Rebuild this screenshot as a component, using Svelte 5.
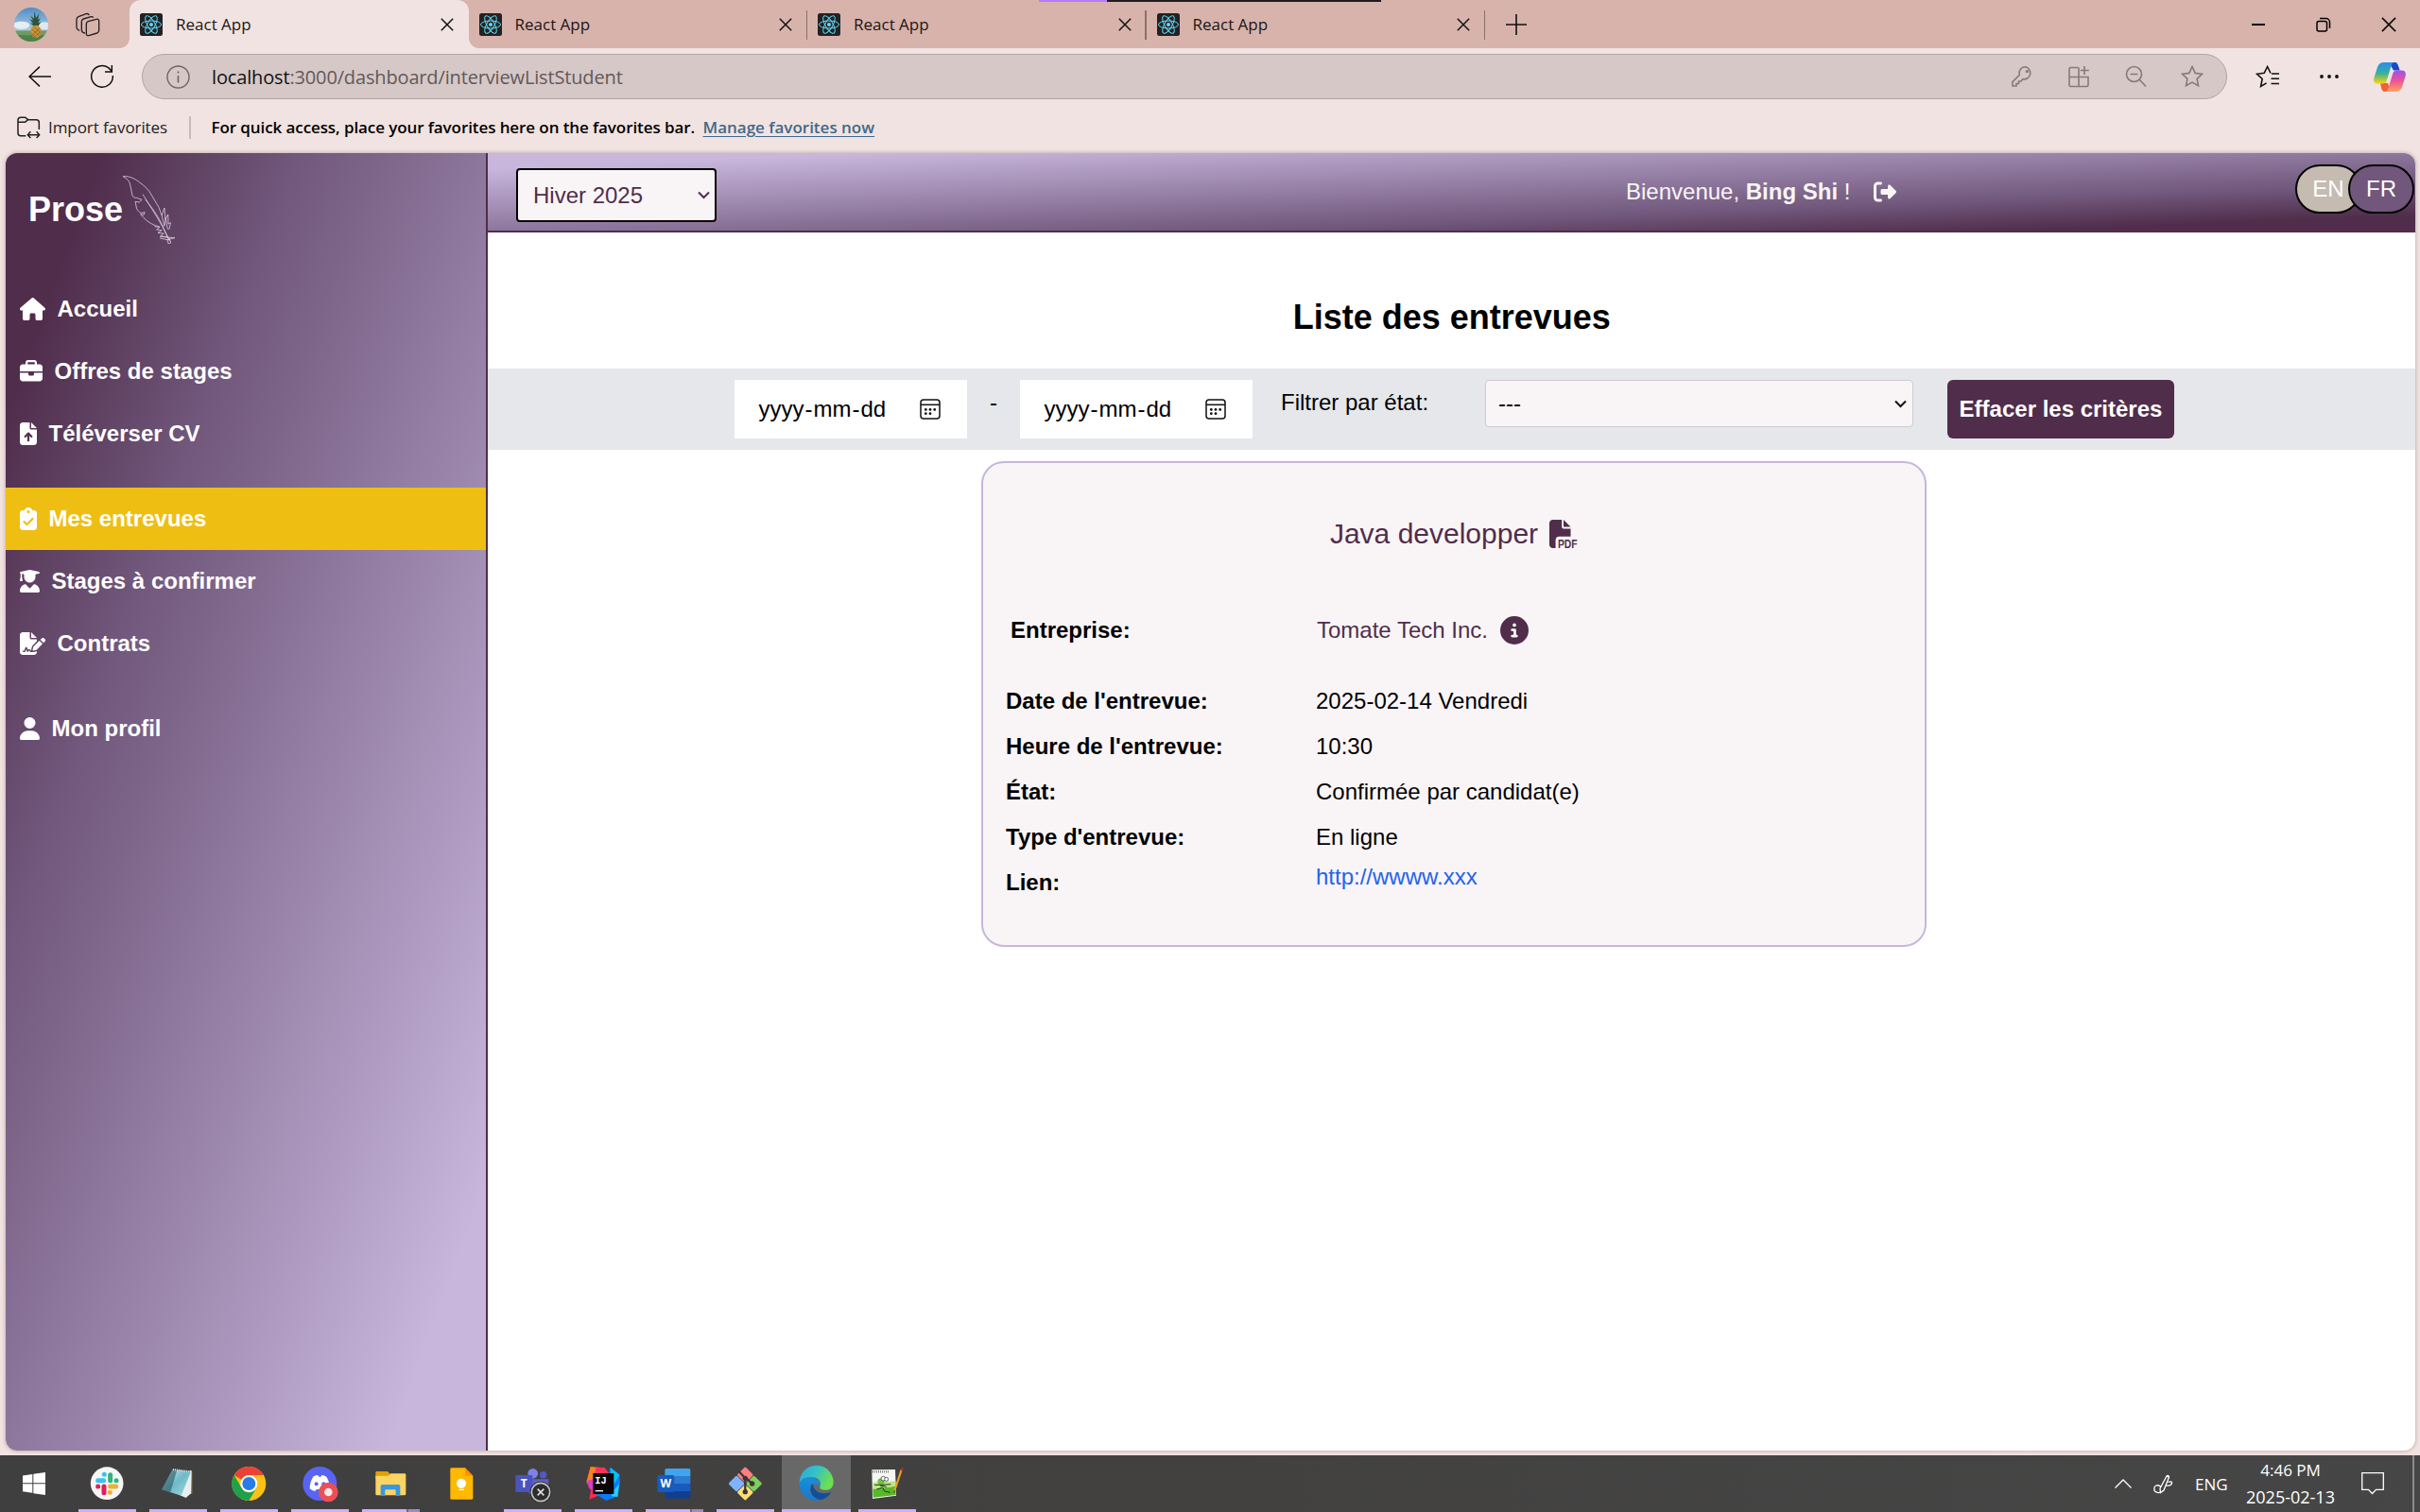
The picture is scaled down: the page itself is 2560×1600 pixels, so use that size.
<script>
  const tabs = [
    { title: 'React App', active: true },
    { title: 'React App', divider: true },
    { title: 'React App', divider: true },
    { title: 'React App', divider: true }
  ];

  const icons = {
    home: { w: 576, d: 'M575.8 255.5c0 18-15 32.1-32 32.1h-32l.7 160.2c0 2.7-.2 5.4-.5 8.1V472c0 22.1-17.9 40-40 40H456c-1.1 0-2.2 0-3.3-.1c-1.4 .1-2.8 .1-4.2 .1H416 392c-22.1 0-40-17.9-40-40V448 384c0-17.7-14.3-32-32-32H256c-17.7 0-32 14.3-32 32v64 24c0 22.1-17.9 40-40 40H160 128.1c-1.5 0-3-.1-4.5-.2c-1.2 .1-2.4 .2-3.6 .2H104c-22.1 0-40-17.9-40-40V360c0-.9 0-1.9 .1-2.8V287.6H32c-18 0-32-14-32-32.1c0-9 3-17 10-24L266.4 8c7-7 15-8 22-8s15 2 21 7L564.8 231.5c8 7 12 15 11 24z' },
    briefcase: { w: 512, d: 'M184 48H328c4.4 0 8 3.6 8 8V96H176V56c0-4.4 3.6-8 8-8zm-56 8V96H64C28.7 96 0 124.7 0 160v96H192 320 512V160c0-35.3-28.7-64-64-64H384V56c0-30.9-25.1-56-56-56H184c-30.9 0-56 25.1-56 56zM512 288H320v32c0 17.7-14.3 32-32 32H224c-17.7 0-32-14.3-32-32V288H0V416c0 35.3 28.7 64 64 64H448c35.3 0 64-28.7 64-64V288z' },
    upload: { w: 384, d: 'M64 0C28.7 0 0 28.7 0 64V448c0 35.3 28.7 64 64 64H320c35.3 0 64-28.7 64-64V160H256c-17.7 0-32-14.3-32-32V0H64zM256 0V128H384L256 0zM216 408c0 13.3-10.7 24-24 24s-24-10.7-24-24V305.9l-31 31c-9.4 9.4-24.6 9.4-33.9 0s-9.4-24.6 0-33.9l72-72c9.4-9.4 24.6-9.4 33.9 0l72 72c9.4 9.4 9.4 24.6 0 33.9s-24.6 9.4-33.9 0l-31-31V408z' },
    clipboard: { w: 384, d: 'M192 0c-41.8 0-77.4 26.7-90.5 64H64C28.7 64 0 92.7 0 128V448c0 35.3 28.7 64 64 64H320c35.3 0 64-28.7 64-64V128c0-35.3-28.7-64-64-64H282.5C269.4 26.7 233.8 0 192 0zm0 64a32 32 0 1 1 0 64 32 32 0 1 1 0-64zM305 273L177 401c-9.4 9.4-24.6 9.4-33.9 0L79 337c-9.4-9.4-9.4-24.6 0-33.9s24.6-9.4 33.9 0l47 47L271 239c9.4-9.4 24.6-9.4 33.9 0s9.4 24.6 0 33.9z' },
    graduate: { w: 448, d: 'M219.3 .5c3.1-.6 6.3-.6 9.4 0l200 40C439.9 42.7 448 52.6 448 64s-8.1 21.3-19.3 23.5L352 102.9V160c0 70.7-57.3 128-128 128s-128-57.3-128-128V102.9L48 93.3v65.1l15.7 78.4c.9 4.7-.3 9.6-3.3 13.3s-7.6 5.9-12.4 5.9H16c-4.8 0-9.3-2.1-12.4-5.9s-4.3-8.6-3.3-13.3L16 158.4V86.6C6.5 83.3 0 74.3 0 64C0 52.6 8.1 42.7 19.3 40.5l200-40zM111.9 327.7c10.5-3.4 21.8 .4 29.4 8.5l71 75.5c6.3 6.7 17 6.7 23.3 0l71-75.5c7.6-8.1 18.9-11.9 29.4-8.5C401 348.6 448 409.4 448 481.3c0 17-13.8 30.7-30.7 30.7H30.7C13.8 512 0 498.2 0 481.3c0-71.9 47-132.7 111.9-153.6z' },
    signature: { w: 576, d: 'M64 0C28.7 0 0 28.7 0 64V448c0 35.3 28.7 64 64 64H320c35.3 0 64-28.7 64-64V428.7c-2.7 1.1-5.4 2-8.2 2.7l-60.1 15c-3 .7-6 1.2-9 1.4c-.9 .1-1.8 .2-2.7 .2H240c-6.1 0-11.6-3.4-14.3-8.8l-8.8-17.7c-1.7-3.4-5.1-5.5-8.8-5.5s-7.2 2.1-8.8 5.5l-8.8 17.7c-2.9 5.9-9.2 9.4-15.7 8.8s-12.1-5.1-13.9-11.3L144 381l-9.8 32.8c-6.1 20.3-24.8 34.2-46 34.2H80c-8.8 0-16-7.2-16-16s7.2-16 16-16h8.2c7.1 0 13.3-4.6 15.3-11.4l14.9-49.5c3.4-11.3 13.8-19.1 25.6-19.1s22.2 7.8 25.6 19.1l11.6 38.6c7.4-6.2 16.8-9.7 26.8-9.7c15.9 0 30.4 9 37.5 23.2l4.4 8.8h8.9c-3.1-8.8-3.7-18.4-1.4-27.8l15-60.1c2.8-11.3 8.6-21.5 16.8-29.7L384 203.6V160H256c-17.7 0-32-14.3-32-32V0H64zM256 0V128H384L256 0zM549.8 139.7c-15.6-15.6-40.9-15.6-56.6 0l-29.4 29.4 71 71 29.4-29.4c15.6-15.6 15.6-40.9 0-56.6l-14.4-14.4zM311.9 321c-4.1 4.1-7 9.2-8.4 14.9l-15 60.1c-1.4 5.5 .2 11.2 4.2 15.2s9.7 5.6 15.2 4.2l60.1-15c5.6-1.4 10.8-4.3 14.9-8.4L512.1 262.7l-71-71L311.9 321z' },
    user: { w: 448, d: 'M224 256A128 128 0 1 0 224 0a128 128 0 1 0 0 256zm-45.7 48C79.8 304 0 383.8 0 482.3C0 498.7 13.3 512 29.7 512H418.3c16.4 0 29.7-13.3 29.7-29.7C448 383.8 368.2 304 269.7 304H178.3z' },
    logout: { w: 512, d: 'M377.9 105.9L500.7 228.7c7.2 7.2 11.3 17.1 11.3 27.3s-4.1 20.1-11.3 27.3L377.9 406.1c-6.4 6.4-15 9.9-24 9.9c-18.7 0-33.9-15.2-33.9-33.9l0-62.1-128 0c-17.7 0-32-14.3-32-32l0-64c0-17.7 14.3-32 32-32l128 0 0-62.1c0-18.7 15.2-33.9 33.9-33.9c9 0 17.6 3.6 24 9.9zM160 96L96 96c-17.7 0-32 14.3-32 32l0 256c0 17.7 14.3 32 32 32l64 0c17.7 0 32 14.3 32 32s-14.3 32-32 32l-64 0c-53 0-96-43-96-96L0 128C0 75 43 32 96 32l64 0c17.7 0 32 14.3 32 32s-14.3 32-32 32z' },
    info: { w: 512, d: 'M256 512A256 256 0 1 0 256 0a256 256 0 1 0 0 512zM216 336h24V272H216c-13.3 0-24-10.7-24-24s10.7-24 24-24h48c13.3 0 24 10.7 24 24v88h8c13.3 0 24 10.7 24 24s-10.7 24-24 24H216c-13.3 0-24-10.7-24-24s10.7-24 24-24zm40-208a32 32 0 1 1 0 64 32 32 0 1 1 0-64z' }
  };

  const menu = [
    [
      { icon: 'home', label: 'Accueil' },
      { icon: 'briefcase', label: 'Offres de stages' },
      { icon: 'upload', label: 'Téléverser CV' }
    ],
    [
      { icon: 'clipboard', label: 'Mes entrevues', active: true },
      { icon: 'graduate', label: 'Stages à confirmer' },
      { icon: 'signature', label: 'Contrats' }
    ],
    [{ icon: 'user', label: 'Mon profil' }]
  ];

  const details = [
    { label: "Date de l'entrevue:", value: '2025-02-14 Vendredi' },
    { label: "Heure de l'entrevue:", value: '10:30' },
    { label: 'État:', value: 'Confirmée par candidat(e)' },
    { label: "Type d'entrevue:", value: 'En ligne' },
    { label: 'Lien:', value: 'http://wwww.xxx', link: true }
  ];
</script>

{#snippet solid(name)}
  <svg class="solid" viewBox="0 0 {icons[name].w} 512" fill="currentColor"><path d={icons[name].d} /></svg>
{/snippet}

{#snippet cross(size)}
  <svg width={size} height={size} viewBox="0 0 14 14" stroke="#111" stroke-width="1.5" fill="none"><path d="M.8.8 13.2 13.2M13.2.8.8 13.2" /></svg>
{/snippet}

{#snippet dateField()}
  <div class="date">
    <span class="mask"><span>yyyy</span>-<span>mm</span>-<span>dd</span></span>
    <svg width="22" height="22" viewBox="0 0 22 22" fill="none" stroke="#111" stroke-width="1.5">
      <rect x="1" y="1" width="20" height="20" rx="3" />
      <path d="M1 6.3h20" />
      <g fill="#111" stroke="none">
        <circle cx="6.3" cy="11.4" r="1.4" /><circle cx="11" cy="11.4" r="1.4" /><circle cx="15.7" cy="11.4" r="1.4" />
        <circle cx="6.3" cy="15.7" r="1.4" /><circle cx="11" cy="15.7" r="1.4" />
      </g>
    </svg>
  </div>
{/snippet}

<div class="desktop">
  <div class="tabstrip">
    <div class="corner">
      <svg width="36" height="36" viewBox="45 24 108 108">
        <defs>
          <clipPath id="av"><circle cx="99" cy="78" r="54" /></clipPath>
          <linearGradient id="sky" x1="0" y1="0" x2="0" y2="1"><stop offset="0" stop-color="#4d8dc8" /><stop offset=".7" stop-color="#b6cfe2" /></linearGradient>
        </defs>
        <g clip-path="url(#av)">
          <rect x="45" y="24" width="108" height="108" fill="url(#sky)" />
          <ellipse cx="68" cy="80" rx="26" ry="12" fill="#e6eef3" /><ellipse cx="142" cy="82" rx="20" ry="12" fill="#dde8ef" />
          <rect x="45" y="97" width="108" height="36" fill="#6f9a62" />
          <path d="M45 112h108v20H45z" fill="#4f8148" />
          <path d="m112 86-17-13 10 2-12-15 12 6-9-17 12 10 1-23 6 21 9-15-3 21 8-6-8 16 9-3-10 15z" fill="#2c5538" />
          <ellipse cx="114" cy="100" rx="17" ry="20" fill="#c9963d" />
          <path d="m100 92 25 22m-27-9 16 14m-8-35 22 20m-2-14-27 24m30-14-20 18" stroke="#8d6424" stroke-width="2.500" />
        </g>
      </svg>
      <svg width="26" height="26" viewBox="241 39 78 78" fill="none" stroke="#222" stroke-width="4">
        <path d="M275 76q0-6 6-8l26-7q8-2 8 6v30q0 6-6 8l-26 8q-8 1-8-6z" />
        <path d="M271 105q-11 0-11-11V68q0-6 6-8l24-7q5-1 7 3" />
        <path d="M254 97q-10-2-10-12V62q0-6 6-9l24-9q7-2 10 4" />
      </svg>
    </div>
    {#each tabs as tab}
      <div class="tab" class:active={tab.active}>
        <svg width="24" height="24" viewBox="0 0 24 24" fill="none" stroke="#61dafb" stroke-width="1">
          <rect width="24" height="24" rx="2.500" fill="#222" stroke="none" />
          <ellipse cx="12" cy="12" rx="10.500" ry="4" />
          <ellipse cx="12" cy="12" rx="10.500" ry="4" transform="rotate(60 12 12)" />
          <ellipse cx="12" cy="12" rx="10.500" ry="4" transform="rotate(120 12 12)" />
          <circle cx="12" cy="12" r="2" fill="#61dafb" stroke="none" />
        </svg>
        <span class="tab-title">{tab.title}</span>
        {@render cross(14)}
        {#if tab.divider}<i></i>{/if}
      </div>
    {/each}
    <svg class="newtab" width="22" height="22" viewBox="0 0 22 22" stroke="#111" stroke-width="1.600"><path d="M0 11h22M11 0v22" /></svg>
    <div class="window-buttons">
      <svg width="16" height="16" viewBox="0 0 16 16" stroke="#000" stroke-width="2"><path d="M1 8h14" /></svg>
      <svg width="16" height="16" viewBox="0 0 16 16" fill="none" stroke="#000" stroke-width="1.500"><rect x="1" y="4.500" width="10.500" height="10.500" rx="2" /><path d="M4 1.500h6.500a4 4 0 0 1 4 4V12" /></svg>
      {@render cross(16)}
    </div>
    <div class="progress"><b></b></div>
  </div>

  <div class="toolbar">
    <svg class="back" width="24" height="22" viewBox="90 208 72 66" fill="none" stroke="#111" stroke-width="4.500"><path d="M162 241H93M126 210 93 241l33 31" /></svg>
    <svg class="reload" width="26" height="26" viewBox="285 204 78 78" fill="none" stroke="#111" stroke-width="4.500"><path d="M358 240a34 34 0 1 1-14-25l10 10M355 207v21h-22" /></svg>
    <div class="address">
      <svg width="25" height="25" viewBox="0 0 25 25" fill="none" stroke="#6d6463" stroke-width="1.400"><circle cx="12.500" cy="12.500" r="11.500" /><path d="M12.500 11v7.500M12.500 6.500v2" stroke-width="1.600" /></svg>
      <span class="url"><b>localhost</b>:3000/dashboard/interviewListStudent</span>
      <div class="address-icons">
        <svg viewBox="0 0 24 24"><path d="M15.500 1.800a6.500 6.500 0 0 0-6.200 8.600L2 17.700V22h4v-2.500h2.500V17H11l1.800-2.300A6.500 6.500 0 1 0 15.500 1.800z" /><circle cx="17.300" cy="6.600" r=".9" fill="#857a79" /></svg>
        <svg viewBox="0 0 24 24"><path d="M11.500 2.500H3.500a1.500 1.500 0 0 0-1.500 1.500v17a1.500 1.500 0 0 0 1.500 1.500h17a1.500 1.500 0 0 0 1.500-1.500v-8.500H2M12 2.500v20M18 1v9M13.800 5.500h9" /></svg>
        <svg viewBox="0 0 24 24"><circle cx="10.500" cy="9.500" r="8" /><path d="m16.500 15.500 6.500 7M6.500 9.500h8" /></svg>
        <svg viewBox="0 0 24 24"><path d="m12 1.500 3.200 6.900 7.300.9-5.400 5.100 1.400 7.400-6.500-3.700-6.500 3.700 1.400-7.400L1.500 9.300l7.300-.9z" /></svg>
      </div>
    </div>
    <svg class="favs" width="26" height="26" viewBox="0 0 26 26" fill="none" stroke="#111" stroke-width="1.600"><path d="M16 9.500 12.600 2.500 9.200 9.300 1.500 10.300l5.600 5.200-1.500 8 6-3.600M17 10h8M16.500 15.300H25M16.500 20.500H25" /></svg>
    <svg class="dots" width="22" height="6" viewBox="0 0 22 6" fill="#111"><circle cx="3" cy="3" r="1.900" /><circle cx="11" cy="3" r="1.900" /><circle cx="19" cy="3" r="1.900" /></svg>
    <svg class="copilot" width="34" height="31" viewBox="0 0 34 31">
      <defs>
        <linearGradient id="cpa" x1="0" y1="0" x2="0" y2="1"><stop offset="0" stop-color="#2a8df0" /><stop offset=".5" stop-color="#35b0a0" /><stop offset="1" stop-color="#ffd400" /></linearGradient>
        <linearGradient id="cpb" x1="0" y1="0" x2="0" y2="1"><stop offset="0" stop-color="#a050ec" /><stop offset=".5" stop-color="#ee5495" /><stop offset="1" stop-color="#ffa35c" /></linearGradient>
      </defs>
      <path d="M16 0h6c3 0 3.500 2 4.500 5l1.200 3.500H21z" fill="#1b47c9" />
      <path d="M18 31h-6c-2.600 0-3.500-2-4.200-5l-.8-4h8z" fill="#f0603a" />
      <path d="M11 0h11c-2 0-3 2-4 5.500l-4 13C13 21.500 12 22.500 9 22.500H4.500C.5 22.500-.5 20 .5 16L4 5C5.200 1.500 7.500 0 11 0z" fill="url(#cpa)" />
      <path d="M23 31H12c2 0 3-2 4-5.500l4-13c1-3 2-4 5-4h4.500c4 0 5 2.500 4 6.500L30 26c-1.200 3.500-3.500 5-7 5z" fill="url(#cpb)" />
    </svg>
  </div>

  <div class="favbar">
    <svg width="26" height="24" viewBox="54 367 78 72" fill="none" stroke="#222" stroke-width="4.500"><path d="M82 429H66q-9 0-9-9V380q0-9 9-9h12q3 0 6 3l6 4h25q9 0 9 9v22M57 386h20q4 0 7-4l5-4M88 426h36M97 416l-9 10 9 10M116 416l9 10-9 10" /></svg>
    <span class="import">Import favorites</span>
    <i></i>
    <span class="hint">For quick access, place your favorites here on the favorites bar.</span>
    <span class="manage">Manage favorites now</span>
  </div>

  <div class="page">
    <aside>
      <div class="brand">
        <span>Prose</span>
        <svg width="56" height="73" viewBox="377 77 162 219" preserveAspectRatio="none" fill="none" stroke="#eadfea" stroke-opacity=".85" stroke-width="2.500">
          <path d="M377 79c18-2 35 6 50 18 16 12 30 25 37 40l23 40 9 26 8-24 3 35 8-14 1 30 7-4-5 22" />
          <path d="M378 80c12 6 18 12 21 24l7 36c2 5 8 8 13 7l16 6-8 8-12-2 4 22c3 6 8 12 13 14l12-2-3 8-10-2c12 16 26 28 45 36l12 3" />
          <path d="M438 136c20 34 38 62 58 98l24 50M446 152c16 22 30 40 42 62l30 66" />
          <path d="m474 238 16 2-10 8 16 2-12 8 18 2-10 8 22 4M490 270l46 4-22 6-24-5M512 278l4 14 8-2-6-16M496 203l8 34 4-26 6 36" />
        </svg>
      </div>
      <nav>
        {#each menu as group}
          <ul>
            {#each group as item}
              <li class:active={item.active}>{@render solid(item.icon)}<span>{item.label}</span></li>
            {/each}
          </ul>
        {/each}
      </nav>
    </aside>

    <main>
      <header>
        <div class="session">
          <span>Hiver 2025</span>
          <svg width="13" height="9" viewBox="0 0 13 9" fill="none" stroke="#502d4b" stroke-width="2"><path d="m1 1.500 5.500 5.500L12 1.500" /></svg>
        </div>
        <div class="welcome">Bienvenue, <b>Bing Shi</b> ! {@render solid('logout')}</div>
        <div class="langs"><span class="en">EN</span><span class="fr">FR</span></div>
      </header>

      <h1>Liste des entrevues</h1>

      <div class="filters">
        {@render dateField()}
        <span class="dash">-</span>
        {@render dateField()}
        <label for="state">Filtrer par état:</label>
        <div class="state" id="state">
          <span>---</span>
          <svg width="13" height="9" viewBox="0 0 13 9" fill="none" stroke="#111" stroke-width="2"><path d="m1 1.500 5.500 5.500L12 1.500" /></svg>
        </div>
        <button>Effacer les critères</button>
      </div>

      <section class="card">
        <h2>
          Java developper
          <svg class="pdf" width="30" height="30" viewBox="0 0 512 512" fill="currentColor">
            <path d="M0 64C0 28.700 28.700 0 64 0L224 0l0 128c0 17.700 14.300 32 32 32l128 0 0 144-208 0c-35.300 0-64 28.700-64 64l0 144-48 0c-35.300 0-64-28.700-64-64L0 64zm384 64l-128 0L256 0 384 128z" />
            <text x="152" y="509" font-size="212" font-weight="700" textLength="352" lengthAdjust="spacingAndGlyphs">PDF</text>
          </svg>
        </h2>
        <div class="company">
          <b>Entreprise:</b>
          <span>Tomate Tech Inc.</span>
          {@render solid('info')}
        </div>
        <dl>
          {#each details as row}
            <div><dt>{row.label}</dt><dd class:link={row.link}>{row.value}</dd></div>
          {/each}
        </dl>
      </section>
    </main>
  </div>

  <div class="taskbar">
    <div class="start"><svg width="24" height="24" viewBox="0 0 72 72" fill="#fff"><path d="M0 10.500 31 6v28H0zM34 5.500 72 0v34H34zM0 37h31v28.500L0 61zM34 37h38v35l-38-5.500z" /></svg></div>
    <ul class="apps">
      <li class="open">
        <svg viewBox="281 150 120 120">
          <circle cx="338.500" cy="209" r="52" fill="#f7f5f5" />
          <g fill="none" stroke-width="15" stroke-linecap="round">
            <path d="M310 200h18" stroke="#36c5f0" /><path d="M330 181v0" stroke="#36c5f0" />
            <path d="M349 182v18" stroke="#2eb67d" /><path d="M368 200v0" stroke="#2eb67d" />
            <path d="M349 219h18" stroke="#ecb22e" /><path d="M348 238v0" stroke="#ecb22e" />
            <path d="M329 219v20" stroke="#e01e5a" /><path d="M310 219v0" stroke="#e01e5a" />
          </g>
        </svg>
      </li>
      <li class="open">
        <svg viewBox="506 150 120 120">
          <defs><linearGradient id="note" x1="0" y1="0" x2="1" y2="1"><stop offset="0" stop-color="#d5f0f4" /><stop offset=".5" stop-color="#6fb9c8" /><stop offset="1" stop-color="#a5dbe3" /></linearGradient></defs>
          <path d="M600 170h9v72l-9 2z" fill="#9b7a3c" />
          <path d="m570 247 32-80 5 2-2 72-16 14z" fill="#e9eeee" />
          <path d="m547 164 58 8-31 76-61-19z" fill="url(#note)" />
          <path d="m547 164 14 2-21 71-27-8z" fill="#1e4b55" opacity=".55" />
          <path d="m548 165 58 7" stroke="#ddd" stroke-width="6" stroke-dasharray="3 3" />
        </svg>
      </li>
      <li class="open">
        <svg viewBox="731 150 120 120">
          <circle cx="789" cy="210" r="54" fill="#fbc116" />
          <path d="M742.200 183A54 54 0 0 1 835.800 183H789A27 27 0 0 0 765 197z" fill="#ea4335" />
          <path d="M742.200 183A54 54 0 0 0 789 264L813 223.500A27 27 0 0 1 765.600 223.500z" fill="#1fa04c" />
          <circle cx="789" cy="210" r="27" fill="#fff" /><circle cx="789" cy="210" r="21" fill="#2a7bea" />
        </svg>
      </li>
      <li class="open">
        <svg viewBox="956 150 120 120">
          <circle cx="1014" cy="210" r="54" fill="#5865f2" />
          <path d="M994 187q8-4 14-4l3 5h6l3-5q8 1 15 5 10 16 11 38-8 7-17 8l-4-6h-22l-4 6q-10-2-17-8 0-22 12-39z" fill="#fff" />
          <circle cx="1003" cy="211" r="6" fill="#5865f2" /><circle cx="1026" cy="211" r="6" fill="#5865f2" />
          <circle cx="1041" cy="237" r="31" fill="#ec4f54" /><circle cx="1041" cy="237" r="13" fill="#fbe9e9" />
        </svg>
      </li>
      <li class="open multi">
        <svg viewBox="1181 150 120 120">
          <path d="M1191 175q0-4 4-4h34l8 8v16h-46z" fill="#e0a100" />
          <path d="M1191 185h40l8-7h44q4 0 4 4v60q0 5-4 5h-88q-4 0-4-5z" fill="#fcd462" />
          <path d="M1207 249v-30q0-6 6-6h50q6 0 6 6v30h-14v-17q0-3-3-3h-28q-3 0-3 3v17z" fill="#3a96dd" />
        </svg>
      </li>
      <li>
        <svg viewBox="-64 150 120 120">
          <path d="M-42 164q0-4 4-4H5l25 25v71q0 4-4 4h-64q-4 0-4-4z" fill="#ffb900" /><path d="M5 160l25 25H5z" fill="#ff8f00" />
          <circle cx="-7" cy="209" r="15" fill="#fff" /><path d="M-14 216h14v7h-14zM-15 227H2v4h-17z" fill="#fff" />
        </svg>
      </li>
      <li class="open">
        <svg viewBox="161 150 120 120">
          <circle cx="220" cy="178" r="16" fill="#7b83eb" /><circle cx="253" cy="182" r="11" fill="#5059c9" />
          <path d="M200 196h70v30a30 30 0 0 1-30 28 34 34 0 0 1-36-20z" fill="#5a62c8" />
          <rect x="165" y="183" width="54" height="54" rx="4" fill="#4b53bc" />
          <text x="192" y="222" font-size="36" font-weight="700" text-anchor="middle" fill="#fff">T</text>
          <circle cx="245" cy="237" r="34" fill="#2a2a2a" /><circle cx="245" cy="237" r="29" fill="#2d2d2d" stroke="#c4c4c4" stroke-width="5" />
          <path d="m235 227 20 20m0-20-20 20" stroke="#ddd" stroke-width="5" />
        </svg>
      </li>
      <li class="open">
        <svg viewBox="386 150 120 120">
          <path d="m403 156 44 4 20 30-70 20-7-5z" fill="#fc801d" /><path d="m420 158 28 2 16 20-54 40z" fill="#fe315d" />
          <path d="m390 208 30-10 20 45-41 17 5-30z" fill="#fe2857" /><path d="m394 200 18-4v36l-14-8z" fill="#d63ec6" />
          <path d="m465 158 30 22 2 26-8 44-36 14-38-24 40-30z" fill="#087cfa" /><path d="m465 158 30 24-20 34z" fill="#07c3f2" /><path d="m478 230 16-20-5 42-20-2z" fill="#21d0f8" />
          <rect x="411" y="177" width="66" height="66" fill="#0b0508" />
          <text x="417" y="210" font-size="31" font-weight="700" fill="#fff" class="mono">IJ</text><path d="M418 231h25v4h-25z" fill="#fff" />
        </svg>
      </li>
      <li class="open multi">
        <svg viewBox="611 150 120 120">
          <path d="M639 187v-20q0-5 5-5h71q5 0 5 5v20z" fill="#41a5ee" /><path d="M639 186h81v25h-81z" fill="#2b7cd3" /><path d="M639 210h81v24h-81z" fill="#185abd" />
          <path d="M639 234h81v18q0 5-5 5h-71q-5 0-5-5z" fill="#103f91" />
          <rect x="615" y="183" width="54" height="54" rx="5" fill="#185abd" />
          <text x="642" y="223" font-size="36" font-weight="700" text-anchor="middle" fill="#fff">W</text>
        </svg>
      </li>
      <li class="open">
        <svg viewBox="836 150 120 120">
          <g transform="rotate(45 894 210)">
            <rect x="856" y="172" width="37" height="37" rx="4" fill="#ff7f7f" /><rect x="895" y="172" width="37" height="37" rx="4" fill="#7fcf5f" />
            <rect x="856" y="211" width="37" height="37" rx="4" fill="#80b3ff" /><rect x="895" y="211" width="37" height="37" rx="4" fill="#ffdf73" />
          </g>
          <path d="m874 171 20 22v43M894 190l22 20" stroke="#3a3535" stroke-width="7" fill="none" />
          <circle cx="894" cy="236" r="8" fill="#3a3535" /><circle cx="916" cy="210" r="8" fill="#3a3535" /><circle cx="894" cy="193" r="8" fill="#3a3535" />
        </svg>
      </li>
      <li class="open current">
        <svg viewBox="1060 150 120 120">
          <defs>
            <linearGradient id="eg" x1="0" y1="0" x2="1" y2=".4"><stop offset="0" stop-color="#2aa4dd" /><stop offset=".5" stop-color="#35c1c8" /><stop offset="1" stop-color="#6de04f" /></linearGradient>
            <linearGradient id="eb" x1="0" y1="0" x2="0" y2="1"><stop offset="0" stop-color="#1b8fd6" /><stop offset="1" stop-color="#1479d4" /></linearGradient>
          </defs>
          <path d="M1065 208A54 54 0 0 1 1173 204C1173 224 1160 232 1144 230 1132 229 1128 224 1130 218 1136 208 1128 192 1110 190 1090 188 1072 194 1065 208z" fill="url(#eg)" />
          <path d="M1065 208C1072 192 1092 187 1110 191 1126 195 1134 208 1129 219 1120 204 1100 210 1098 226 1096 244 1112 262 1132 262A54 54 0 0 1 1065 208z" fill="url(#eb)" />
          <path d="M1107 209C1092 226 1102 256 1132 262 1148 258 1160 247 1167 236 1140 247 1110 240 1107 209z" fill="#0f4f9c" />
        </svg>
      </li>
      <li class="open">
        <svg viewBox="1286 150 120 120">
          <path d="m1296 166 74-1 3 83-75 10z" fill="#f5f7f4" />
          <path d="m1299 226 72-8 1 28-72 8z" fill="#58b82a" /><path d="m1299 206 72-4 1 16-73 10z" fill="#bfe58a" />
          <path d="M1298 172h54" stroke="#444" stroke-width="7" stroke-dasharray="2 4" />
          <circle cx="1325" cy="204" r="11" fill="#6fc43d" /><circle cx="1332" cy="194" r="7" fill="#fff" stroke="#222" stroke-width="2" /><circle cx="1342" cy="196" r="6" fill="#fff" stroke="#222" stroke-width="2" />
          <path d="M1304 214h22l30-2M1312 228l18-6 6 12 18 4M1322 216l20 4" stroke="#1c3a12" stroke-width="3" fill="none" />
          <path d="m1390 166-22 66" stroke="#f0a21c" stroke-width="6" /><path d="m1393 160-3 9" stroke="#b3302c" stroke-width="6" /><path d="m1368 232-2 7" stroke="#333" stroke-width="3" />
        </svg>
      </li>
    </ul>
    <div class="tray">
      <svg class="up" width="18" height="10" viewBox="0 0 18 10" fill="none" stroke="#fff" stroke-width="1.300"><path d="M.5 9.500 9 1l8.500 8.500" /></svg>
      <svg class="pen" width="21" height="21" viewBox="0 0 21 21" fill="none" stroke="#fff" stroke-width="1.300"><path d="m7 15 7-13c.7-1.300 3-.5 2.400 1.200L11 17l-3.500 2.500zM14 2l3 1.500M7.500 13C4 10.500.8 12 .8 15.500c0 4 4.500 4.700 6.500 3.500M13.500 12c2 .5 5.500 0 6-2.500.3-1.700-2-2-4-1" /></svg>
      <span class="lang">ENG</span>
      <div class="clock"><span>4:46 PM</span><span>2025-02-13</span></div>
      <svg class="bell" width="24" height="24" viewBox="0 0 24 24" fill="none" stroke="#fff" stroke-width="1.300"><path d="M.7.7h22.600v17.600H15.500L11.500 22.500 7.500 18.300H.7z" /></svg>
      <i></i>
    </div>
  </div>
</div>

<style>
  :global(body) { margin: 0; }
  .desktop {
    width: 2560px; height: 1600px; overflow: hidden; display: flex; flex-direction: column;
    background: #f1e3e1; color: #000; font-family: "Liberation Sans", Arial, sans-serif; box-sizing: border-box;
  }
  .desktop *, .desktop *::before { box-sizing: border-box; }
  svg { display: block; flex: none; }
  ul, dl, dd, h1, h2 { margin: 0; padding: 0; list-style: none; }
  i { display: block; flex: none; }

  .tabstrip, .toolbar, .favbar, .taskbar { font-family: "Open Sans", "Noto Sans", sans-serif; flex: none; }

  /* Tabs */
  .tabstrip { height: 51px; display: flex; align-items: center; background: #d8b3ac; position: relative; }
  .corner { width: 137px; flex: none; padding-left: 15px; display: flex; align-items: center; gap: 29px; height: 51px; }
  .tab {
    width: 358.500px; flex: none; height: 51px; padding: 0 16px 0 11px; display: flex; align-items: center;
    position: relative; font-size: 17px; color: #1b1616;
  }
  .tab.active { background: #f1e3e1; border-radius: 12px 12px 0 0; }
  .tab.active::before, .tab.active::after {
    content: ""; position: absolute; bottom: 0; width: 10px; height: 10px;
  }
  .tab.active::before { left: -10px; background: radial-gradient(circle at 0 0, transparent 9.500px, #f1e3e1 10px); }
  .tab.active::after { right: -10px; background: radial-gradient(circle at 100% 0, transparent 9.500px, #f1e3e1 10px); }
  .tab-title { flex: 1; padding-left: 14px; }
  .tab i { position: absolute; right: 0; top: 11px; width: 1.500px; height: 31px; background: #8c6f6b; }
  .newtab { margin-left: 22px; }
  .window-buttons { margin-left: auto; padding-right: 25px; display: flex; gap: 53px; align-items: center; }
  .progress { position: absolute; top: 0; left: 1099px; width: 362px; height: 2px; background: #1e1e1e; }
  .progress b { display: block; width: 72px; height: 2px; background: #b57bff; }

  /* Toolbar */
  .toolbar { height: 60px; display: flex; align-items: center; padding: 0 15px 0 30px; }
  .reload { margin-left: 41px; }
  .address {
    margin-left: 29px; width: 2206px; height: 48px; border: 1.500px solid #b3a4a3; border-radius: 24px; background: #d6c8c7;
    display: flex; align-items: center; padding: 0 24px 0 25px;
  }
  .url { margin-left: 23px; font-size: 20px; letter-spacing: -.15px; color: #625958; }
  .url b { font-weight: 400; color: #111; }
  .address-icons { margin-left: auto; display: flex; gap: 36px; }
  .address-icons svg { width: 24px; height: 24px; fill: none; stroke: #857a79; stroke-width: 1.600; }
  .favs { margin-left: 30px; }
  .dots { margin-left: 41px; }
  .copilot { margin-left: auto; }

  .favbar { height: 51px; padding: 0 0 4px 18px; display: flex; align-items: center; font-size: 17px; white-space: nowrap; }
  .import { margin-left: 7px; width: 127px; color: #222; letter-spacing: -.08px; }
  .favbar i { width: 1.500px; height: 24px; background: #cbb9b8; margin: 0 22px; }
  .hint { width: 520px; font-weight: 600; letter-spacing: -.09px; }
  .manage { color: #40698a; font-weight: 600; text-decoration: underline; text-underline-offset: 3px; }

  /* Application */
  .page {
    margin: 0 5.500px 5px 6px; flex: 1; display: flex; border-radius: 12px; overflow: hidden; background: #fff;
    box-shadow: 0 0 4px rgba(60, 30, 30, .35);
  }
  aside {
    width: 510px; border-right: 2px solid #502d4b; flex: none;
    background: linear-gradient(to bottom right, #502d4b 10%, #70577b 30%, #c8b6dd 90%);
    color: #fff; font-weight: 700; font-size: 24px;
  }
  .brand { height: 132px; display: flex; padding: 24px 0 0 24px; }
  .brand span { font-size: 36px; line-height: 72px; width: 100px; }
  nav { display: flex; flex-direction: column; gap: 24px; }
  nav li { height: 66px; display: flex; align-items: center; padding-left: 15px; gap: 12.500px; }
  nav li.active { background: #eebf12; }
  .solid { height: 24px; width: auto; }

  main { flex: 1; display: flex; flex-direction: column; font-size: 24px; }
  header {
    height: 84px; flex: none; display: flex; border-bottom: 2px solid #502d4b; color: #f9f5f7;
    background: linear-gradient(to top left, #502d4b 10%, #70577b 30%, #c8b6dd 90%);
  }
  .session {
    margin: 16px 0 0 30px; width: 212px; height: 57px; border: 2px solid #000; border-radius: 4px; background: #f9f5f7; color: #502d4b;
    display: flex; align-items: center; justify-content: space-between; padding: 0 5px 0 16px;
  }
  .welcome { margin-left: 962px; height: 82px; display: flex; align-items: center; white-space: pre; }
  .welcome .solid { margin-left: 18px; }
  .langs { margin: 12px 0 0 auto; padding-right: .500px; display: flex; }
  .langs span {
    width: 70px; height: 52px; border: 2px solid #000; border-radius: 26px; color: #fff;
    display: flex; align-items: center; justify-content: center;
  }
  .en { background: #c5bbb0; }
  .langs .fr { background: #70577b; margin-left: -14px; }

  h1 { height: 144px; padding: 70px 0 0 1px; font-size: 36px; line-height: 40px; text-align: center; }
  .filters { height: 86px; flex: none; padding: 12px 0 0 261px; background: #e5e7eb; display: flex; align-items: flex-start; }
  .date { width: 246px; height: 62px; background: #fff; display: flex; align-items: center; justify-content: space-between; padding: 0 28px 0 24.500px; }
  .mask span { padding: 0 1px; }
  .dash { width: 56px; text-align: center; line-height: 48px; }
  label { margin-left: 30px; width: 216px; line-height: 48px; }
  .state {
    width: 453px; height: 50px; border: 1.500px solid #ccc; border-radius: 4px; background: #f9f5f7;
    display: flex; align-items: center; justify-content: space-between; padding: 0 6px 0 13px;
  }
  button {
    margin-left: 36px; width: 240px; height: 62px; border: 0; border-radius: 6px; background: #502d4b; color: #fff;
    font: 700 24px "Liberation Sans", Arial, sans-serif; padding: 0; white-space: nowrap;
  }

  .card {
    margin: 12px 0 0 522px; width: 1000px; height: 514px; border: 2px solid #c8b6dd; border-radius: 24px; background: #f9f5f7;
    padding: 51px 24px 0;
  }
  h2 { height: 48px; display: flex; align-items: center; justify-content: center; gap: 12px; font-size: 30px; font-weight: 400; color: #502d4b; }
  .pdf { overflow: visible; }
  .company { margin-top: 54px; height: 48px; display: flex; align-items: center; padding-left: 5px; color: #502d4b; }
  .company b { width: 324px; color: #000; }
  .company .solid { height: 30px; margin-left: 13px; }
  dl { margin-top: 27px; }
  dl div { height: 48px; display: flex; line-height: 48px; }
  dt { width: 328px; font-weight: 700; }
  dd.link { color: #2563eb; line-height: 36px; }

  /* Taskbar */
  .taskbar { height: 60px; display: flex; background: linear-gradient(90deg, #403f3f, #424140 50%, #464646); color: #fff; }
  .start { width: 76px; display: flex; align-items: center; padding-left: 24px; }
  .apps { display: flex; }
  .apps li { width: 75px; height: 60px; padding: 0 1px; display: flex; align-items: center; justify-content: center; position: relative; }
  .apps svg { width: 40px; height: 40px; }
  .apps .mono { font-family: "Liberation Mono", monospace; }
  .apps .open::after { content: ""; position: absolute; left: 7px; bottom: 0; width: 61px; height: 3px; background: #cdaeff; }
  .apps .multi::after { background: linear-gradient(90deg, #cdaeff 47px, #75688c 47px, #75688c 49px, #a08bc2 49px); }
  .apps .current { background: #696868; margin: 0 1px; width: 73px; }
  .apps .current::after { left: 0; width: 73px; }
  .tray { margin-left: auto; display: flex; align-items: center; font-size: 18px; }
  .pen { margin-left: 23px; }
  .lang { margin-left: 23px; width: 36px; font-size: 17px; }
  .clock { margin-left: 17px; width: 96px; display: flex; flex-direction: column; align-items: center; line-height: 28px; }
  .clock span:first-child { font-size: 17px; }
  .bell { margin-left: 27px; }
  .tray i { width: 2px; height: 60px; background: #8b8b8b; margin: 0 6px 0 30px; }
</style>
